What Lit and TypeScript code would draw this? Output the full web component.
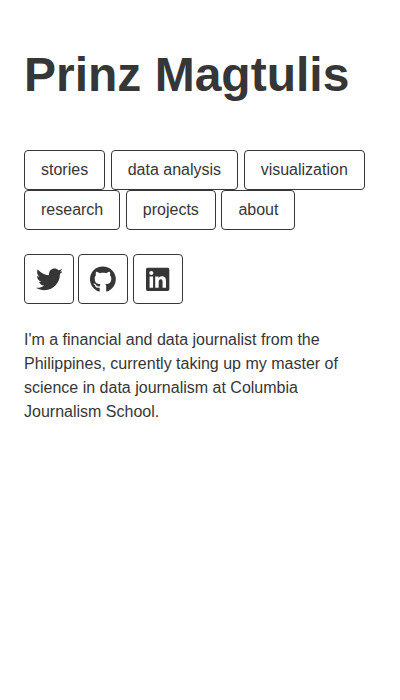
import { LitElement, html, css, svg } from "lit";
import { customElement } from "lit/decorators.js";

const links = ["stories", "data analysis", "visualization", "research", "projects", "about"];

const icons = [
  { label: "Twitter", width: 26.67, box: "0 0 512 512", path: "M459.37 151.716c.325 4.548.325 9.097.325 13.645 0 138.72-105.583 298.558-298.558 298.558-59.452 0-114.68-17.219-161.137-47.106 8.447.974 16.568 1.299 25.34 1.299 49.055 0 94.213-16.568 130.274-44.832-46.132-.975-84.792-31.188-98.112-72.772 6.498.974 12.995 1.624 19.818 1.624 9.421 0 18.843-1.3 27.614-3.573-48.081-9.747-84.143-51.98-84.143-102.985v-1.299c13.969 7.797 30.214 12.67 47.431 13.319-28.264-18.843-46.781-51.005-46.781-87.391 0-19.492 5.197-37.36 14.294-52.954 51.655 63.675 129.3 105.258 216.365 109.807-1.624-7.797-2.599-15.918-2.599-24.04 0-57.828 46.782-104.934 104.934-104.934 30.213 0 57.502 12.67 76.67 33.137 23.715-4.548 46.456-13.32 66.599-25.34-7.798 24.366-24.366 44.833-46.132 57.827 21.117-2.273 41.584-8.122 60.426-16.243-14.292 20.791-32.161 39.308-52.628 54.253z" },
  { label: "GitHub", width: 26, box: "0 0 496 512", path: "M165.900 397.400c0 2-2.300 3.600-5.200 3.600-3.300.3-5.600-1.300-5.600-3.600 0-2 2.300-3.600 5.200-3.600 3-.3 5.600 1.300 5.600 3.600zm-31.100-4.500c-.7 2 1.300 4.300 4.300 4.900 2.600 1 5.600 0 6.200-2s-1.300-4.300-4.300-5.200c-2.600-.7-5.500.3-6.200 2.300zm44.200-1.700c-2.900.7-4.900 2.600-4.600 4.900.3 2 2.900 3.300 5.900 2.600 2.900-.7 4.900-2.600 4.600-4.600-.3-1.900-3-3.200-5.900-2.900zM244.800 8C106.100 8 0 113.300 0 252c0 110.900 69.800 205.800 169.500 239.200 12.800 2.300 17.300-5.600 17.300-12.100 0-6.200-.3-40.400-.3-61.400 0 0-70 15-84.700-29.800 0 0-11.400-29.100-27.800-36.600 0 0-22.900-15.700 1.600-15.400 0 0 24.900 2 38.600 25.800 21.900 38.600 58.600 27.500 72.900 20.900 2.300-16 8.800-27.100 16-33.700-55.900-6.200-112.300-14.300-112.300-110.500 0-27.500 7.600-41.300 23.600-58.900-2.600-6.500-11.100-33.300 2.600-67.900 20.900-6.500 69 27 69 27 20-5.600 41.500-8.500 62.800-8.500s42.800 2.900 62.800 8.500c0 0 48.100-33.600 69-27 13.700 34.700 5.200 61.400 2.600 67.900 16 17.700 25.800 31.500 25.800 58.900 0 96.500-58.900 104.200-114.800 110.500 9.200 7.900 17 22.900 17 46.400 0 33.700-.3 75.400-.3 83.600 0 6.500 4.600 14.400 17.300 12.100C428.200 457.800 496 362.900 496 252 496 113.300 383.500 8 244.800 8z" },
  { label: "LinkedIn", width: 24, box: "0 0 448 512", path: "M416 32H31.900C14.300 32 0 46.500 0 64.300v383.400C0 465.500 14.300 480 31.900 480H416c17.600 0 32-14.500 32-32.300V64.300c0-17.800-14.400-32.300-32-32.300zM135.400 416H69V202.200h66.500V416zm-33.200-243c-21.300 0-38.500-17.300-38.500-38.500S80.900 96 102.200 96c21.200 0 38.500 17.300 38.500 38.500 0 21.300-17.200 38.500-38.500 38.500zm282.100 243h-66.400V312c0-24.800-.5-56.700-34.500-56.700-34.600 0-39.900 27-39.900 54.900V416h-66.400V202.200h63.700v29.200h.9c8.900-16.800 30.600-34.500 62.900-34.500 67.200 0 79.700 44.300 79.700 101.900V416z" },
];

@customElement("app-root")
export class AppRoot extends LitElement {
  static styles = css`
    :host {
      display: block;
      box-sizing: border-box;
      min-height: 100vh;
      padding: 48px 24px;
      background: #fff;
      color: #363636;
      font: 16px/24px "Liberation Sans", Arial, sans-serif;
    }
    h1 { margin: 0 0 48px; font-size: 48px; line-height: 54px; font-weight: 700; }
    nav { display: flex; flex-wrap: wrap; column-gap: 5.57px; }
    a {
      box-sizing: border-box;
      display: inline-flex;
      align-items: center;
      justify-content: center;
      border: 1px solid #363636;
      border-radius: 4px;
      color: inherit;
      text-decoration: none;
    }
    nav a { height: 40px; padding: 0 16px; }
    .social { display: flex; gap: 4.45px; margin: 24px 0; }
    .social a { width: 50px; height: 50px; }
    svg { display: block; height: 26.67px; fill: currentColor; }
    p { margin: 0; }
  `;

  render() {
    return html`
      <h1>Prinz Magtulis</h1>
      <nav>${links.map((l) => html`<a href="#">${l}</a>`)}</nav>
      <div class="social">
        ${icons.map((i) => html`<a href="#" aria-label=${i.label}>
          <svg width=${i.width} viewBox=${i.box} preserveAspectRatio="xMinYMid meet">${svg`<path d=${i.path}></path>`}</svg>
        </a>`)}
      </div>
      <p>I'm a financial and data journalist from the Philippines, currently taking up my master of science in data journalism at Columbia Journalism School.</p>
    `;
  }
}
